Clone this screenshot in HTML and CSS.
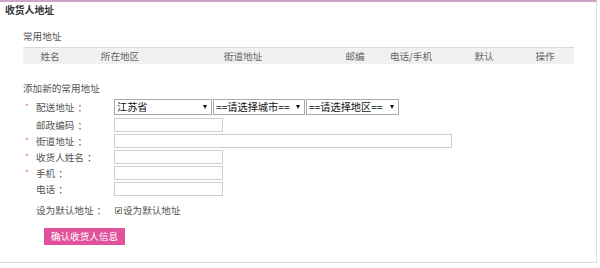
FILE: index.html
```html
<!DOCTYPE html>
<html lang="zh-CN">
<head>
<meta charset="utf-8">
<title>收货人地址</title>
<link rel="stylesheet" href="styles.css">
</head>
<body>
<div class="panel">
  <h2 class="title">收货人地址</h2>
  <div class="section">
    <h3 class="sub">常用地址</h3>
    <div class="thead">
      <span>姓名</span><span>所在地区</span><span>街道地址</span><span>邮编</span><span>电话/手机</span><span>默认</span><span>操作</span><span></span>
    </div>
    <h3 class="sub add">添加新的常用地址</h3>
  </div>
  <form class="form">
    <div class="frow first">
      <span class="star">*</span><span class="lbl">配送地址<span class="colon">：</span></span>
      <span class="sel w1"><select><option>江苏省</option></select></span>
      <span class="sel w2"><select><option>==请选择城市==</option></select></span>
      <span class="sel w3"><select><option>==请选择地区==</option></select></span>
    </div>
    <div class="frow">
      <span class="star"></span><span class="lbl">邮政编码<span class="colon">：</span></span>
      <input class="ipt short" type="text">
    </div>
    <div class="frow">
      <span class="star">*</span><span class="lbl">街道地址<span class="colon">：</span></span>
      <input class="ipt long" type="text">
    </div>
    <div class="frow">
      <span class="star">*</span><span class="lbl">收货人姓名<span class="colon">：</span></span>
      <input class="ipt short" type="text">
    </div>
    <div class="frow">
      <span class="star">*</span><span class="lbl">手机<span class="colon">：</span></span>
      <input class="ipt short" type="text">
    </div>
    <div class="frow">
      <span class="star"></span><span class="lbl">电话<span class="colon">：</span></span>
      <input class="ipt short" type="text">
    </div>
    <div class="frow check">
      <span class="star"></span><span class="lbl">设为默认地址<span class="colon">：</span></span>
      <label class="cb"><span class="box">✔</span>设为默认地址</label>
    </div>
    <div class="actions">
      <button type="button" class="btn">确认收货人信息</button>
    </div>
  </form>
</div>
</body>
</html>
```

FILE: styles.css
```css
html, body {
  margin: 0;
  padding: 0;
  background: #fff;
}
body {
  font-family: "Noto Sans CJK SC", "Noto Sans", sans-serif;
  font-size: 9.6px;
  color: #555;
}
.panel {
  box-sizing: border-box;
  width: 597px;
  height: 263px;
  border-top: 2px solid #d2a3c8;
  border-right: 1px solid #e0e0e0;
  border-bottom: 1px solid #dcdcdc;
}
.title {
  margin: 0;
  padding: 1px 5px 0;
  font-size: 9.8px;
  line-height: 14px;
  font-weight: bold;
  color: #333;
}
.section {
  padding: 0 22px 0 23px;
}
.sub {
  margin: 12px 0 0;
  font-size: 9.6px;
  line-height: 14px;
  font-weight: normal;
  color: #555;
}
.sub.add {
  margin-top: 17px;
}
.thead {
  margin-top: 4px;
  display: grid;
  grid-template-columns: 54px 86px 160px 64px 48px 98px 24px 1fr;
  height: 16px;
  line-height: 16px;
  border-top: 1px solid #dadada;
  background: #f1f1f1;
  color: #666;
  text-align: center;
  white-space: nowrap;
}
.form {
  margin: 0;
}
.frow {
  display: flex;
  align-items: center;
  height: 16px;
  padding-left: 25px;
}
.frow.first {
  margin-top: 4px;
  margin-bottom: 2px;
}
.frow.check {
  margin-top: 5px;
}
.star {
  width: 11px;
  color: #e0588e;
  font-size: 8px;
  line-height: 16px;
}
.lbl {
  width: 78px;
  color: #555;
  white-space: nowrap;
}
.colon {
  margin-left: 3px;
}
.sel {
  position: relative;
  display: inline-block;
  height: 16px;
  margin-right: 1px;
}
.sel select {
  appearance: none;
  -webkit-appearance: none;
  box-sizing: border-box;
  width: 100%;
  height: 16px;
  margin: 0;
  padding: 0 0 0 2px;
  border: 1px solid #a9a9a9;
  border-radius: 0;
  background: #fff;
  font-family: "Noto Sans CJK SC", sans-serif;
  font-size: 10.2px;
  line-height: 14px;
  color: #111;
}
.sel::after {
  content: "";
  position: absolute;
  right: 5px;
  top: 6px;
  border-left: 2.5px solid transparent;
  border-right: 2.5px solid transparent;
  border-top: 4px solid #111;
  pointer-events: none;
}
.w1 { width: 98px; }
.w2 { width: 92px; }
.w3 { width: 93px; }
.ipt {
  box-sizing: border-box;
  height: 14px;
  margin: 0;
  padding: 0 2px;
  border: 1px solid #c9cfd4;
  border-radius: 0;
  background: #fff;
}
.ipt.short { width: 109px; }
.ipt.long { width: 338px; }
.cb {
  display: flex;
  align-items: center;
  margin-left: 1px;
  color: #555;
}
.box {
  box-sizing: border-box;
  width: 7px;
  height: 7px;
  margin-right: 1px;
  border: 1px solid #999;
  background: #eee;
  font-size: 6px;
  line-height: 5px;
  color: #333;
  text-align: center;
  overflow: hidden;
}
.actions {
  padding: 10px 0 0 44px;
}
.btn {
  display: block;
  box-sizing: border-box;
  width: 81px;
  height: 17px;
  margin: 0;
  padding: 0;
  border: 0;
  border-radius: 0;
  background: #e2519c;
  color: #fff;
  font-family: "Noto Sans CJK SC", sans-serif;
  font-size: 9.6px;
  line-height: 17px;
  text-align: center;
}
```
